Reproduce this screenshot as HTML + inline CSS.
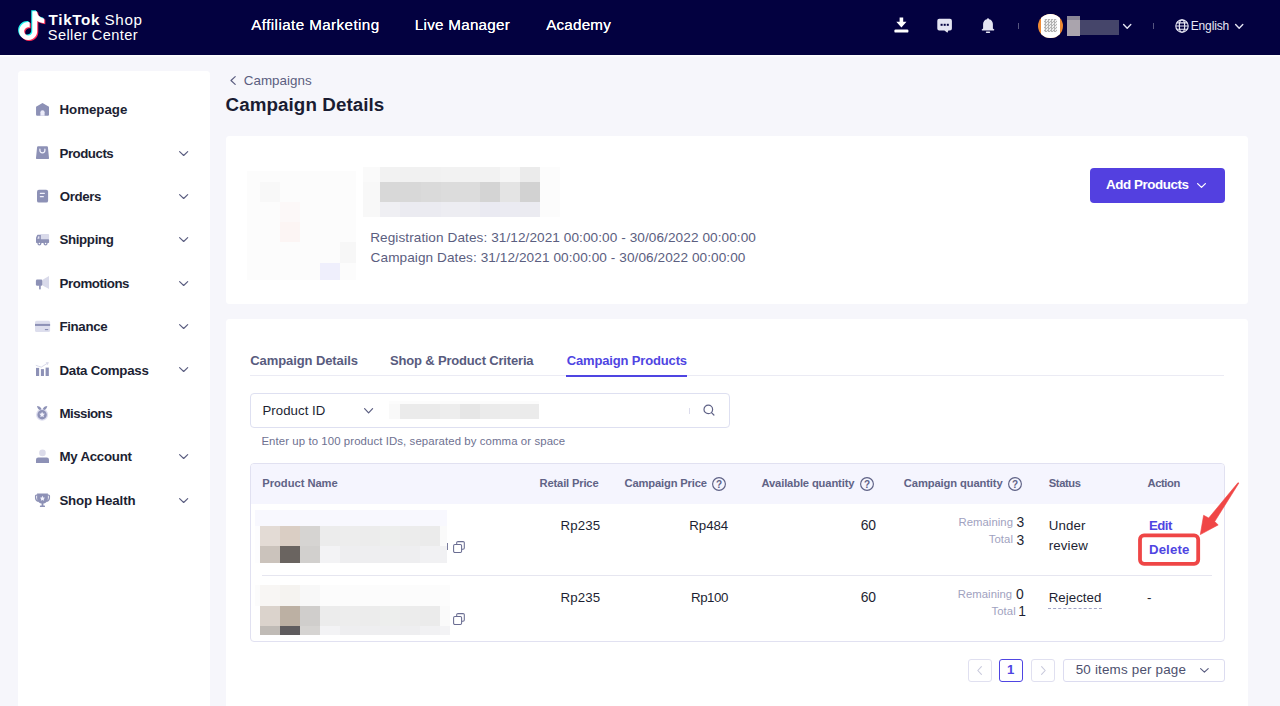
<!DOCTYPE html>
<html><head><meta charset="utf-8"><title>Campaign Details</title>
<style>
*{box-sizing:border-box;margin:0;padding:0}
html,body{width:1280px;height:706px;overflow:hidden;background:#f6f6fb;font-family:"Liberation Sans",sans-serif;color:#1d1f33}
.t{position:absolute;white-space:nowrap;line-height:1}
.b{position:absolute}
svg{position:absolute;overflow:visible}
#hdr{position:absolute;left:0;top:0;width:1280px;height:55px;background:#030140}
#side{position:absolute;left:17.800px;top:70.800px;width:192.200px;height:650px;background:#fff;border-radius:3.500px}
.card{position:absolute;background:#fff;border-radius:3.500px}
</style></head><body>
<div id="hdr"></div><div class="b" style="left:0;top:55px;width:1280px;height:1px;background:#fff"></div><div class="b" style="left:0;top:56px;width:1280px;height:1px;background:#fbfbfe"></div>
<div id="side"></div>
<div class="card" style="left:226px;top:135.800px;width:1022.400px;height:167.900px"></div>
<div class="card" style="left:226px;top:319.300px;width:1022.400px;height:400px"></div>
<svg style="left:16.2px;top:10px" width="30" height="32" viewBox="0 0 25 26.67">
<g transform="translate(0.2,0.2) scale(1.0)"><path d="M12.525.02c1.31-.02 2.61-.01 3.91-.02.08 1.53.63 3.09 1.75 4.17 1.12 1.11 2.7 1.62 4.24 1.79v4.03c-1.44-.05-2.89-.35-4.2-.97-.57-.26-1.1-.59-1.62-.93-.01 2.92.01 5.84-.02 8.75-.08 1.4-.54 2.79-1.35 3.94-1.31 1.92-3.58 3.17-5.91 3.21-1.43.08-2.86-.31-4.08-1.03-2.02-1.19-3.44-3.37-3.65-5.71-.02-.5-.03-1-.01-1.49.18-1.9 1.12-3.72 2.58-4.96 1.66-1.44 3.98-2.13 6.15-1.72.02 1.48-.04 2.96-.04 4.44-.99-.32-2.15-.23-3.02.37-.63.41-1.11 1.04-1.36 1.75-.21.51-.15 1.07-.14 1.61.24 1.64 1.82 3.02 3.5 2.87 1.12-.01 2.19-.66 2.77-1.61.19-.33.4-.67.41-1.06.1-1.79.06-3.57.07-5.36.01-4.03-.01-8.05.02-12.07z" fill="#25f4ee"/></g>
<g transform="translate(2.0,1.9)"><path d="M12.525.02c1.31-.02 2.61-.01 3.91-.02.08 1.53.63 3.09 1.75 4.17 1.12 1.11 2.7 1.62 4.24 1.79v4.03c-1.44-.05-2.89-.35-4.2-.97-.57-.26-1.1-.59-1.62-.93-.01 2.92.01 5.84-.02 8.75-.08 1.4-.54 2.79-1.35 3.94-1.31 1.92-3.58 3.17-5.91 3.21-1.43.08-2.86-.31-4.08-1.03-2.02-1.19-3.44-3.37-3.65-5.71-.02-.5-.03-1-.01-1.49.18-1.9 1.12-3.72 2.58-4.96 1.66-1.44 3.98-2.13 6.15-1.72.02 1.48-.04 2.96-.04 4.44-.99-.32-2.15-.23-3.02.37-.63.41-1.11 1.04-1.36 1.75-.21.51-.15 1.07-.14 1.61.24 1.64 1.82 3.02 3.5 2.87 1.12-.01 2.19-.66 2.77-1.61.19-.33.4-.67.41-1.06.1-1.79.06-3.57.07-5.36.01-4.03-.01-8.05.02-12.07z" fill="#fe2c55"/></g>
<g transform="translate(1.1,1.05)"><path d="M12.525.02c1.31-.02 2.61-.01 3.91-.02.08 1.53.63 3.09 1.75 4.17 1.12 1.11 2.7 1.62 4.24 1.79v4.03c-1.44-.05-2.89-.35-4.2-.97-.57-.26-1.1-.59-1.62-.93-.01 2.92.01 5.84-.02 8.75-.08 1.4-.54 2.79-1.35 3.94-1.31 1.92-3.58 3.17-5.91 3.21-1.43.08-2.86-.31-4.08-1.03-2.02-1.19-3.44-3.37-3.65-5.71-.02-.5-.03-1-.01-1.49.18-1.9 1.12-3.72 2.58-4.96 1.66-1.44 3.98-2.13 6.15-1.72.02 1.48-.04 2.96-.04 4.44-.99-.32-2.15-.23-3.02.37-.63.41-1.11 1.04-1.36 1.75-.21.51-.15 1.07-.14 1.61.24 1.64 1.82 3.02 3.5 2.87 1.12-.01 2.19-.66 2.77-1.61.19-.33.4-.67.41-1.06.1-1.79.06-3.57.07-5.36.01-4.03-.01-8.05.02-12.07z" fill="#fff"/></g>
</svg><svg style="left:894px;top:17px" width="15" height="16" viewBox="0 0 15 16">
<path d="M5.6 .5h3.6v4.2h3.3L7.4 10.6 2.3 4.7h3.3z" fill="#fff"/>
<rect x=".4" y="12.4" width="14" height="3.2" rx="1.2" fill="#fff"/></svg><svg style="left:937px;top:18px" width="16" height="16" viewBox="0 0 16 16">
<path d="M2.2 .8h10.8a1.9 1.9 0 0 1 1.9 1.9v7.9a1.9 1.9 0 0 1-1.9 1.9h-1.6l-1 2.2-3-2.2H2.2a1.9 1.9 0 0 1-1.9-1.9V2.7A1.9 1.9 0 0 1 2.200 .8z" fill="#e4e4f2"/>
<rect x="3.6" y="5.8" width="2" height="2" fill="#030140"/><rect x="6.7" y="5.8" width="2" height="2" fill="#030140"/><rect x="9.8" y="5.8" width="2" height="2" fill="#030140"/></svg><svg style="left:981px;top:18px" width="14" height="16" viewBox="0 0 14 16">
<path d="M7 .2c.6 0 1 .4 1.100 1 2.300 .5 3.800 2.400 3.800 4.900v4.300l1.300 1.100c.3 .3 .1 .900-.4 .9H1.200c-.5 0-.7-.6-.4-.9l1.300-1.100V6.100c0-2.500 1.500-4.400 3.800-4.900C6 .6 6.400 .2 7 .2z" fill="#e4e4f2"/>
<rect x="4.800" y="13.5" width="4.400" height="1.500" rx=".7" fill="#e4e4f2"/></svg><div class="b" style="left:1018px;top:22.5px;width:1px;height:6.5px;background:#55557f"></div><div class="b" style="left:1153px;top:22.5px;width:1px;height:6.5px;background:#55557f"></div><div class="b" style="left:1038px;top:13.7px;width:24.500px;height:24px;border-radius:50%;background:#ee8a34;overflow:hidden">
<div class="b" style="left:2.500px;top:0;width:19.500px;height:24px;background:#fff"></div>
<div class="b" style="left:6px;top:5.500px;width:12.500px;height:13px;background:repeating-conic-gradient(#9a9a9a 0 25%,#e8e8e8 0 50%) 0 0/3px 3px;opacity:.75"></div>
</div><div class="b" style="left:1067px;top:16px;width:13px;height:19.500px;background:#aaa4ad"></div><div class="b" style="left:1067px;top:16px;width:13px;height:4px;background:#8a8696"></div><div class="b" style="left:1080px;top:20px;width:38.500px;height:15px;background:#45456a"></div><svg style="left:1123px;top:23.5px" width="8.4" height="5" viewBox="0 0 8.4 5"><path d="M.6 .6L4.2 4.2L7.800000000000001 .6" fill="none" stroke="#e4e4f2" stroke-width="1.4" stroke-linecap="round" stroke-linejoin="round"/></svg><svg style="left:1235px;top:23.5px" width="8.4" height="5" viewBox="0 0 8.4 5"><path d="M.6 .6L4.2 4.2L7.800000000000001 .6" fill="none" stroke="#e4e4f2" stroke-width="1.4" stroke-linecap="round" stroke-linejoin="round"/></svg><svg style="left:1174.500px;top:18.800px" width="14" height="14" viewBox="0 0 14 14" fill="none" stroke="#e8e8f4" stroke-width="1.150">
<circle cx="7" cy="7" r="6.200"/><ellipse cx="7" cy="7" rx="2.700" ry="6.200"/><path d="M1 7h12M1.800 3.800h10.400M1.800 10.200h10.400"/></svg><svg style="left:0;top:0" width="1280" height="706" viewBox="0 0 1280 706"><path d="M42.500 102.900L36.050 106.700V114.700a1.100 1.100 0 0 0 1.100 1.100H47.900a1.100 1.100 0 0 0 1.100-1.100V106.700z" fill="#8d91b6"/><path d="M40.400 115.800V112.300a2.100 2.100 0 0 1 4.200 0V115.800z" fill="#ececfa"/><path d="M38.100 146.200H46.900a1 1 0 0 1 1 .9L49 157.900a1.100 1.100 0 0 1-1.100 1.200H37.100a1.100 1.100 0 0 1-1.100-1.200L37.100 147.100a1 1 0 0 1 1-.9z" fill="#8d91b6"/><path d="M39.900 149.100v1.200a2.500 2.500 0 0 0 5 0v-1.200" fill="none" stroke="#f2f2fc" stroke-width="1.250" stroke-linecap="round"/><rect x="37" y="189.800" width="11.100" height="12.800" rx="1.900" fill="#8d91b6"/><rect x="39.800" y="192.800" width="5.100" height="1.250" rx=".5" fill="#f2f2fc"/><rect x="39.800" y="195.900" width="4.100" height="1.250" rx=".5" fill="#f2f2fc"/><rect x="40.400" y="234" width="8.700" height="6" rx=".9" fill="#d9daea"/><path d="M37.700 234.800H40.900V240H36V238.200c0-.5 .1-.9 .3-1.300l.7-1.500c.2-.4 .4-.6 .7-.6z" fill="#8d91b6"/><rect x="36" y="239.300" width="13.100" height="3.700" rx=".7" fill="#8d91b6"/><circle cx="39.400" cy="243.400" r="2" fill="#8d91b6"/><circle cx="45.550" cy="243.400" r="2" fill="#8d91b6"/><circle cx="39.400" cy="243.400" r=".75" fill="#fff"/><circle cx="45.550" cy="243.400" r=".75" fill="#fff"/><path d="M38.300 236.200h1.100v2.600h-2.100z" fill="#e4e4f2"/><path d="M42.600 279.700L49 276.100V289L42.600 285.600z" fill="#d9daea"/><rect x="35.900" y="279.600" width="6.500" height="6.200" rx="1.300" fill="#8d91b6"/><rect x="39.100" y="285" width="1.650" height="4.400" rx=".6" fill="#8d91b6"/><rect x="35" y="320.800" width="15.100" height="11.300" rx="1.600" fill="#dddeed"/><rect x="35" y="323.900" width="15.100" height="2.050" fill="#8d91b6"/><rect x="44.900" y="329" width="3.300" height="1.150" fill="#8d91b6"/><rect x="36" y="367.900" width="3.150" height="8.100" fill="#8d91b6"/><rect x="40.900" y="369.100" width="3.050" height="6.900" fill="#8d91b6"/><rect x="45.600" y="367.600" width="3.250" height="8.400" fill="#8d91b6"/><path d="M36.200 365.400L38.300 366.200 41.300 367.100 47.800 363" fill="none" stroke="#d9daea" stroke-width="1" stroke-linecap="round" stroke-linejoin="round"/><path d="M45.600 362.200L48.800 362.300 47.700 365.300z" fill="#d9daea"/><circle cx="42.100" cy="414.700" r="6" fill="#dcdcee"/><circle cx="42.100" cy="414.700" r="4.700" fill="#8d91b6"/><path d="M42.100 411.800l.85 1.800 1.950 .25-1.450 1.350 .4 1.950-1.750-.95-1.750 .95 .4-1.950-1.450-1.350 1.950-.25z" fill="#f2f2fc"/><path d="M37 405.900c1.600 0 3.200 .8 4.100 2.300l.4 .9-1.500 .9c-1.700-.6-2.800-2.200-3-4.100z" fill="#8d91b6"/><path d="M47.300 405.900c-1.600 0-3.200 .8-4.100 2.300l-.4 .9 1.500 .9c1.700-.6 2.800-2.200 3-4.100z" fill="#8d91b6"/><circle cx="42.450" cy="452.900" r="3.300" fill="#dcdcea"/><path d="M38.200 457.600H46.800a2.200 2.200 0 0 1 2.200 2.200V463H36V459.800a2.200 2.200 0 0 1 2.200-2.200z" fill="#8d91b6"/><path d="M37.600 495.200H36.300a.7 .7 0 0 0-.7 .7v1.900c0 1.900 1.100 3.200 2.900 3.600M47.400 495.200h1.300a.7 .7 0 0 1 .7 .7v1.900c0 1.900-1.100 3.200-2.900 3.600" fill="none" stroke="#8d91b6" stroke-width="1.300"/><path d="M37.100 493.600H47.900V498.500c0 2.800-2.100 5.100-5.400 5.100s-5.400-2.300-5.400-5.100z" fill="#8d91b6"/><rect x="41.600" y="503" width="1.800" height="3" fill="#8d91b6"/><rect x="39.900" y="505.400" width="5.100" height="1.650" rx=".5" fill="#8d91b6"/><path d="M42.450 495.800l.8 1.650 1.800 .25-1.300 1.250 .3 1.800-1.600-.85-1.600 .85 .3-1.800-1.300-1.250 1.800-.25z" fill="#f2f2fc"/></svg><svg style="left:178.9px;top:150.5px" width="9.3" height="5.3" viewBox="0 0 9.3 5.3"><path d="M.6 .6L4.65 4.5L8.700000000000001 .6" fill="none" stroke="#5a5d80" stroke-width="1.15" stroke-linecap="round" stroke-linejoin="round"/></svg><svg style="left:178.9px;top:193.9px" width="9.3" height="5.3" viewBox="0 0 9.3 5.3"><path d="M.6 .6L4.65 4.5L8.700000000000001 .6" fill="none" stroke="#5a5d80" stroke-width="1.15" stroke-linecap="round" stroke-linejoin="round"/></svg><svg style="left:178.9px;top:237.2px" width="9.3" height="5.3" viewBox="0 0 9.3 5.3"><path d="M.6 .6L4.65 4.5L8.700000000000001 .6" fill="none" stroke="#5a5d80" stroke-width="1.15" stroke-linecap="round" stroke-linejoin="round"/></svg><svg style="left:178.9px;top:280.7px" width="9.3" height="5.3" viewBox="0 0 9.3 5.3"><path d="M.6 .6L4.65 4.5L8.700000000000001 .6" fill="none" stroke="#5a5d80" stroke-width="1.15" stroke-linecap="round" stroke-linejoin="round"/></svg><svg style="left:178.9px;top:324.1px" width="9.3" height="5.3" viewBox="0 0 9.3 5.3"><path d="M.6 .6L4.65 4.5L8.700000000000001 .6" fill="none" stroke="#5a5d80" stroke-width="1.15" stroke-linecap="round" stroke-linejoin="round"/></svg><svg style="left:178.9px;top:367.4px" width="9.3" height="5.3" viewBox="0 0 9.3 5.3"><path d="M.6 .6L4.65 4.5L8.700000000000001 .6" fill="none" stroke="#5a5d80" stroke-width="1.15" stroke-linecap="round" stroke-linejoin="round"/></svg><svg style="left:178.9px;top:454.2px" width="9.3" height="5.3" viewBox="0 0 9.3 5.3"><path d="M.6 .6L4.65 4.5L8.700000000000001 .6" fill="none" stroke="#5a5d80" stroke-width="1.15" stroke-linecap="round" stroke-linejoin="round"/></svg><svg style="left:178.9px;top:497.6px" width="9.3" height="5.3" viewBox="0 0 9.3 5.3"><path d="M.6 .6L4.65 4.5L8.700000000000001 .6" fill="none" stroke="#5a5d80" stroke-width="1.15" stroke-linecap="round" stroke-linejoin="round"/></svg><svg style="left:230px;top:76.400px" width="6" height="9" viewBox="0 0 6 9"><path d="M5.200 .6L1 4.500 5.200 8.400" fill="none" stroke="#5b5e80" stroke-width="1.200" stroke-linecap="round" stroke-linejoin="round"/></svg><div class="b" style="left:246.6px;top:170.5px;width:109.4px;height:109.0px;background:#fcfcfc"></div><div class="b" style="left:280.0px;top:202.0px;width:20.0px;height:40.0px;background:#fcf8f8"></div><div class="b" style="left:280.0px;top:222.0px;width:20.0px;height:20.0px;background:#fcf5f4"></div><div class="b" style="left:319.7px;top:263.0px;width:20.3px;height:16.5px;background:#efeffc"></div><div class="b" style="left:340.0px;top:242.0px;width:16.0px;height:21.0px;background:#f7f7f7"></div><div class="b" style="left:260.0px;top:182.0px;width:20.0px;height:20.0px;background:#f8f8f8"></div><div class="b" style="left:362.7px;top:166.6px;width:17.7px;height:15.2px;background:#fafafa"></div><div class="b" style="left:362.7px;top:181.8px;width:17.7px;height:20.2px;background:#f8f8f8"></div><div class="b" style="left:362.7px;top:202.0px;width:17.7px;height:14.6px;background:#f8f8f8"></div><div class="b" style="left:380.2px;top:166.6px;width:20.2px;height:15.2px;background:#f2f2f2"></div><div class="b" style="left:380.2px;top:181.8px;width:20.2px;height:20.2px;background:#d8d8d8"></div><div class="b" style="left:380.2px;top:202.0px;width:20.2px;height:14.6px;background:#efeff3"></div><div class="b" style="left:400.2px;top:166.6px;width:20.6px;height:15.2px;background:#f1f1f1"></div><div class="b" style="left:400.2px;top:181.8px;width:20.6px;height:20.2px;background:#d8d8d8"></div><div class="b" style="left:400.2px;top:202.0px;width:20.6px;height:14.6px;background:#ebebf1"></div><div class="b" style="left:420.6px;top:166.6px;width:20.1px;height:15.2px;background:#f1f1f1"></div><div class="b" style="left:420.6px;top:181.8px;width:20.1px;height:20.2px;background:#dadada"></div><div class="b" style="left:420.6px;top:202.0px;width:20.1px;height:14.6px;background:#ebebf1"></div><div class="b" style="left:440.5px;top:166.6px;width:20.1px;height:15.2px;background:#f2f2f2"></div><div class="b" style="left:440.5px;top:181.8px;width:20.1px;height:20.2px;background:#dcdcdc"></div><div class="b" style="left:440.5px;top:202.0px;width:20.1px;height:14.6px;background:#ededf2"></div><div class="b" style="left:460.4px;top:166.6px;width:19.6px;height:15.2px;background:#f2f2f2"></div><div class="b" style="left:460.4px;top:181.8px;width:19.6px;height:20.2px;background:#dcdcdc"></div><div class="b" style="left:460.4px;top:202.0px;width:19.6px;height:14.6px;background:#ededf2"></div><div class="b" style="left:479.8px;top:166.6px;width:20.2px;height:15.2px;background:#f2f2f2"></div><div class="b" style="left:479.8px;top:181.8px;width:20.2px;height:20.2px;background:#d4d4d4"></div><div class="b" style="left:479.8px;top:202.0px;width:20.2px;height:14.6px;background:#eaeaf2"></div><div class="b" style="left:499.8px;top:166.6px;width:20.1px;height:15.2px;background:#f6f6f6"></div><div class="b" style="left:499.8px;top:181.8px;width:20.1px;height:20.2px;background:#e4e4e4"></div><div class="b" style="left:499.8px;top:202.0px;width:20.1px;height:14.6px;background:#ebebf2"></div><div class="b" style="left:519.7px;top:166.6px;width:20.6px;height:15.2px;background:#ebebeb"></div><div class="b" style="left:519.7px;top:181.8px;width:20.6px;height:20.2px;background:#d2d2d2"></div><div class="b" style="left:519.7px;top:202.0px;width:20.6px;height:14.6px;background:#ebebf1"></div><div class="b" style="left:540.1px;top:166.6px;width:20.1px;height:15.2px;background:#fcfcfc"></div><div class="b" style="left:540.1px;top:181.8px;width:20.1px;height:20.2px;background:#fcfcfc"></div><div class="b" style="left:540.1px;top:202.0px;width:20.1px;height:14.6px;background:#fcfcfc"></div><div class="b" style="left:1090px;top:167.500px;width:135px;height:35.500px;border-radius:4px;background:#5340e0"></div><svg style="left:1196.7px;top:182.6px" width="9" height="5.2" viewBox="0 0 9 5.2"><path d="M.6 .6L4.5 4.4L8.4 .6" fill="none" stroke="#fff" stroke-width="1.3" stroke-linecap="round" stroke-linejoin="round"/></svg><div class="b" style="left:250px;top:375px;width:974px;height:1px;background:#ebebf4"></div><div class="b" style="left:566.200px;top:374.700px;width:120.800px;height:2.100px;background:#4f45e2"></div><div class="b" style="left:249.500px;top:393px;width:480.500px;height:35px;border:1px solid #dee0f1;border-radius:4px;background:#fff"></div><svg style="left:364.3px;top:408.3px" width="9.2" height="5.6" viewBox="0 0 9.2 5.6"><path d="M.6 .6L4.6 4.8L8.6 .6" fill="none" stroke="#5a5d80" stroke-width="1.2" stroke-linecap="round" stroke-linejoin="round"/></svg><div class="b" style="left:389.0px;top:401.0px;width:150.2px;height:17.9px;background:#fcfcfc"></div><div class="b" style="left:389.0px;top:404.1px;width:10.7px;height:14.8px;background:#f9f9f9"></div><div class="b" style="left:399.7px;top:404.1px;width:20.2px;height:14.8px;background:#ebebeb"></div><div class="b" style="left:419.7px;top:404.1px;width:20.3px;height:14.8px;background:#eaeaea"></div><div class="b" style="left:439.8px;top:404.1px;width:20.3px;height:14.8px;background:#ededed"></div><div class="b" style="left:459.9px;top:404.1px;width:20.4px;height:14.8px;background:#e6e6e6"></div><div class="b" style="left:480.1px;top:404.1px;width:20.1px;height:14.8px;background:#ebebeb"></div><div class="b" style="left:500.0px;top:404.1px;width:20.2px;height:14.8px;background:#ececec"></div><div class="b" style="left:520.0px;top:404.1px;width:19.4px;height:14.8px;background:#ebebeb"></div><div class="b" style="left:689px;top:407.500px;width:1px;height:6.500px;background:#dcdcec"></div><svg style="left:702.700px;top:404.300px" width="12" height="12" viewBox="0 0 12 12" fill="none" stroke="#5e6186" stroke-width="1.200" stroke-linecap="round"><circle cx="5.300" cy="5.400" r="4.300"/><path d="M8.500 8.600l2.400 2.400"/></svg><div class="b" style="left:249.500px;top:462.500px;width:975px;height:179.500px;border:1px solid #e1e1f1;border-radius:4px;background:#fff;overflow:hidden"><div style="height:40.500px;background:#f5f5fe"></div></div><div class="b" style="left:262px;top:575.200px;width:950px;height:1px;background:#e6e6f0"></div><svg style="left:711.4px;top:476px" width="16" height="16" viewBox="0 0 16 16"><circle cx="8" cy="8" r="6.400" fill="none" stroke="#5f6286" stroke-width="1.150"/><text x="8" y="11.600" text-anchor="middle" font-family="Liberation Sans, sans-serif" font-size="10" font-weight="bold" fill="#5f6286">?</text></svg><svg style="left:859.1px;top:476px" width="16" height="16" viewBox="0 0 16 16"><circle cx="8" cy="8" r="6.400" fill="none" stroke="#5f6286" stroke-width="1.150"/><text x="8" y="11.600" text-anchor="middle" font-family="Liberation Sans, sans-serif" font-size="10" font-weight="bold" fill="#5f6286">?</text></svg><svg style="left:1007px;top:476px" width="16" height="16" viewBox="0 0 16 16"><circle cx="8" cy="8" r="6.400" fill="none" stroke="#5f6286" stroke-width="1.150"/><text x="8" y="11.600" text-anchor="middle" font-family="Liberation Sans, sans-serif" font-size="10" font-weight="bold" fill="#5f6286">?</text></svg><div class="b" style="left:254.8px;top:509.8px;width:192.2px;height:15.8px;background:#f8f8fe"></div><div class="b" style="left:254.8px;top:525.6px;width:5.2px;height:37.1px;background:#fdfdfe"></div><div class="b" style="left:260.0px;top:525.6px;width:20.2px;height:20.4px;background:#e3dbd5"></div><div class="b" style="left:260.0px;top:545.5px;width:20.2px;height:17.2px;background:#cbc3bc"></div><div class="b" style="left:280.0px;top:525.6px;width:20.3px;height:20.4px;background:#dacec4"></div><div class="b" style="left:280.0px;top:545.5px;width:20.3px;height:17.2px;background:#6a6460"></div><div class="b" style="left:300.1px;top:525.6px;width:20.1px;height:20.4px;background:#d6d4d2"></div><div class="b" style="left:300.1px;top:545.5px;width:20.1px;height:17.2px;background:#d2d0ce"></div><div class="b" style="left:320.0px;top:525.6px;width:20.2px;height:20.4px;background:#ececec"></div><div class="b" style="left:320.0px;top:545.5px;width:20.2px;height:17.2px;background:#f3f3f5"></div><div class="b" style="left:340.0px;top:525.6px;width:20.2px;height:20.4px;background:#ededed"></div><div class="b" style="left:340.0px;top:545.5px;width:20.2px;height:17.2px;background:#eeeef0"></div><div class="b" style="left:360.0px;top:525.6px;width:20.2px;height:20.4px;background:#ececec"></div><div class="b" style="left:360.0px;top:545.5px;width:20.2px;height:17.2px;background:#eeeef0"></div><div class="b" style="left:380.0px;top:525.6px;width:20.2px;height:20.4px;background:#edeeed"></div><div class="b" style="left:380.0px;top:545.5px;width:20.2px;height:17.2px;background:#eeeef0"></div><div class="b" style="left:400.0px;top:525.6px;width:20.2px;height:20.4px;background:#ececec"></div><div class="b" style="left:400.0px;top:545.5px;width:20.2px;height:17.2px;background:#eeeef0"></div><div class="b" style="left:420.0px;top:525.6px;width:19.9px;height:20.4px;background:#ebebeb"></div><div class="b" style="left:420.0px;top:545.5px;width:19.9px;height:17.2px;background:#f1f1f3"></div><div class="b" style="left:439.7px;top:525.6px;width:7.5px;height:20.4px;background:#fafafa"></div><div class="b" style="left:439.7px;top:545.5px;width:7.5px;height:17.2px;background:#f1f1f3"></div><div class="b" style="left:254.8px;top:585.3px;width:195.0px;height:21.0px;background:#fcfcfc"></div><div class="b" style="left:260.0px;top:585.3px;width:20.0px;height:21.0px;background:#f8f6f4"></div><div class="b" style="left:280.0px;top:585.3px;width:20.0px;height:21.0px;background:#f5f3f0"></div><div class="b" style="left:300.0px;top:585.3px;width:20.0px;height:21.0px;background:#f8f8f8"></div><div class="b" style="left:260.0px;top:606.3px;width:20.2px;height:20.7px;background:#dbd3cc"></div><div class="b" style="left:260.0px;top:626.4px;width:20.2px;height:8.6px;background:#c0bbb6"></div><div class="b" style="left:280.0px;top:606.3px;width:20.3px;height:20.7px;background:#bcb0a3"></div><div class="b" style="left:280.0px;top:626.4px;width:20.3px;height:8.6px;background:#5f5c5e"></div><div class="b" style="left:300.1px;top:606.3px;width:20.1px;height:20.7px;background:#d0cecc"></div><div class="b" style="left:300.1px;top:626.4px;width:20.1px;height:8.6px;background:#d6d4d2"></div><div class="b" style="left:320.0px;top:606.3px;width:20.2px;height:20.7px;background:#ececec"></div><div class="b" style="left:320.0px;top:626.4px;width:20.2px;height:8.6px;background:#f3f3f5"></div><div class="b" style="left:340.0px;top:606.3px;width:20.2px;height:20.7px;background:#ededed"></div><div class="b" style="left:340.0px;top:626.4px;width:20.2px;height:8.6px;background:#eeeef0"></div><div class="b" style="left:360.0px;top:606.3px;width:20.2px;height:20.7px;background:#ececec"></div><div class="b" style="left:360.0px;top:626.4px;width:20.2px;height:8.6px;background:#eeeef0"></div><div class="b" style="left:380.0px;top:606.3px;width:20.2px;height:20.7px;background:#edeeed"></div><div class="b" style="left:380.0px;top:626.4px;width:20.2px;height:8.6px;background:#eeeef0"></div><div class="b" style="left:400.0px;top:606.3px;width:20.2px;height:20.7px;background:#ececec"></div><div class="b" style="left:400.0px;top:626.4px;width:20.2px;height:8.6px;background:#eeeef0"></div><div class="b" style="left:420.0px;top:606.3px;width:19.9px;height:20.7px;background:#ebebeb"></div><div class="b" style="left:420.0px;top:626.4px;width:19.9px;height:8.6px;background:#f1f1f3"></div><div class="b" style="left:439.7px;top:606.3px;width:10.3px;height:20.7px;background:#fafafa"></div><div class="b" style="left:439.7px;top:626.4px;width:10.3px;height:8.6px;background:#f3f3f5"></div><div class="b" style="left:446.600px;top:542.500px;width:1px;height:7.500px;background:#7a7d9e"></div><svg style="left:452.6px;top:540.8px" width="12" height="12" viewBox="0 0 12 12" fill="none" stroke="#6a6d92" stroke-width="1.050"><path d="M3.700 3.300V1.900a1.300 1.300 0 0 1 1.300-1.300H10a1.300 1.300 0 0 1 1.300 1.300V7a1.300 1.300 0 0 1-1.300 1.300H8.800"/><rect x=".6" y="3.500" width="8" height="8" rx="1.300"/></svg><svg style="left:452.6px;top:612.8px" width="12" height="12" viewBox="0 0 12 12" fill="none" stroke="#6a6d92" stroke-width="1.050"><path d="M3.700 3.300V1.900a1.300 1.300 0 0 1 1.300-1.300H10a1.300 1.300 0 0 1 1.300 1.300V7a1.300 1.300 0 0 1-1.300 1.300H8.800"/><rect x=".6" y="3.500" width="8" height="8" rx="1.300"/></svg><div class="b" style="left:1048.400px;top:608px;width:53.500px;height:0;border-top:1px dashed #a3a6c8"></div><svg style="left:0;top:0" width="1280" height="706" viewBox="0 0 1280 706"><rect x="1140" y="535.400" width="58.200" height="28.400" rx="4" fill="none" stroke="#ef4646" stroke-width="3.800"/></svg><svg style="left:0;top:0" width="1280" height="706" viewBox="0 0 1280 706"><path d="M1238.900 483L1214.700 521.600 1218.200 524.900 1200.300 534.600 1203.600 515.300 1208.700 518 1237.900 482.800z" fill="#f04646" stroke="#f04646" stroke-width=".6" stroke-linejoin="round"/></svg><div class="b" style="left:968px;top:658.500px;width:23.700px;height:23.300px;border:1px solid #e0e0f0;border-radius:3px;background:#fff"></div><div class="b" style="left:999.300px;top:658.500px;width:23.700px;height:23.300px;border:1px solid #4f45e2;border-radius:3px;background:#fff"></div><div class="b" style="left:1031px;top:658.500px;width:23.600px;height:23.300px;border:1px solid #e0e0f0;border-radius:3px;background:#fff"></div><svg style="left:977px;top:665.700px" width="5" height="9" viewBox="0 0 5 9"><path d="M4.400 .6L.8 4.500 4.400 8.400" fill="none" stroke="#c8c9dc" stroke-width="1.100" stroke-linecap="round" stroke-linejoin="round"/></svg><svg style="left:1040.600px;top:665.700px" width="5" height="9" viewBox="0 0 5 9"><path d="M.6 .6L4.200 4.500 .6 8.400" fill="none" stroke="#c8c9dc" stroke-width="1.100" stroke-linecap="round" stroke-linejoin="round"/></svg><div class="b" style="left:1062.800px;top:658.500px;width:162px;height:23.300px;border:1px solid #dcdcf0;border-radius:3px;background:#fff"></div><svg style="left:1200px;top:667.9px" width="8.8" height="5" viewBox="0 0 8.8 5"><path d="M.6 .6L4.4 4.2L8.200000000000001 .6" fill="none" stroke="#5a5d80" stroke-width="1.15" stroke-linecap="round" stroke-linejoin="round"/></svg><span class="t" style="left:48.61px;top:12px;font-size:15.2px;font-weight:bold;color:#fff;letter-spacing:0.67px;">TikTok</span>
<span class="t" style="left:104.54px;top:12px;font-size:15.2px;color:#fff;letter-spacing:0.67px;">Shop</span>
<span class="t" style="left:47.81px;top:28px;font-size:14.6px;color:#fff;letter-spacing:0.38px;">Seller Center</span>
<span class="t" style="left:251.31px;top:17px;font-size:15.2px;color:#fff;letter-spacing:0.41px;text-shadow:0 0 .4px #fff;">Affiliate Marketing</span>
<span class="t" style="left:414.82px;top:17px;font-size:15.2px;color:#fff;letter-spacing:0.27px;text-shadow:0 0 .4px #fff;">Live Manager</span>
<span class="t" style="left:546.19px;top:17px;font-size:15.2px;color:#fff;letter-spacing:0.22px;text-shadow:0 0 .4px #fff;">Academy</span>
<span class="t" style="left:1190.74px;top:20px;font-size:12px;color:#e8e8f4;letter-spacing:-0.15px;">English</span>
<span class="t" style="left:59.53px;top:103px;font-size:13.3px;font-weight:bold;color:#1d1f33;letter-spacing:-0.03px;">Homepage</span>
<span class="t" style="left:59.53px;top:147px;font-size:13.3px;font-weight:bold;color:#1d1f33;letter-spacing:-0.49px;">Products</span>
<span class="t" style="left:59.80px;top:190px;font-size:13.3px;font-weight:bold;color:#1d1f33;letter-spacing:-0.41px;">Orders</span>
<span class="t" style="left:59.39px;top:233px;font-size:13.3px;font-weight:bold;color:#1d1f33;letter-spacing:-0.33px;">Shipping</span>
<span class="t" style="left:59.53px;top:277px;font-size:13.3px;font-weight:bold;color:#1d1f33;letter-spacing:-0.43px;">Promotions</span>
<span class="t" style="left:59.53px;top:320px;font-size:13.3px;font-weight:bold;color:#1d1f33;letter-spacing:-0.36px;">Finance</span>
<span class="t" style="left:59.53px;top:364px;font-size:13.3px;font-weight:bold;color:#1d1f33;letter-spacing:-0.28px;">Data Compass</span>
<span class="t" style="left:59.53px;top:407px;font-size:13.3px;font-weight:bold;color:#1d1f33;letter-spacing:-0.55px;">Missions</span>
<span class="t" style="left:59.53px;top:450px;font-size:13.3px;font-weight:bold;color:#1d1f33;letter-spacing:-0.27px;">My Account</span>
<span class="t" style="left:59.39px;top:494px;font-size:13.3px;font-weight:bold;color:#1d1f33;letter-spacing:-0.14px;">Shop Health</span>
<span class="t" style="left:243.77px;top:74px;font-size:13.4px;color:#5b5e80;letter-spacing:0.02px;">Campaigns</span>
<span class="t" style="left:225.61px;top:96px;font-size:18.8px;font-weight:bold;color:#1a1c32;letter-spacing:0.07px;">Campaign Details</span>
<span class="t" style="left:370.17px;top:231px;font-size:13.6px;color:#5b5e80;letter-spacing:0.08px;">Registration Dates: 31/12/2021 00:00:00 - 30/06/2022 00:00:00</span>
<span class="t" style="left:370.62px;top:251px;font-size:13.6px;color:#5b5e80;letter-spacing:0.08px;">Campaign Dates: 31/12/2021 00:00:00 - 30/06/2022 00:00:00</span>
<span class="t" style="left:1106.09px;top:178px;font-size:13.4px;font-weight:bold;color:#fff;letter-spacing:-0.45px;">Add Products</span>
<span class="t" style="left:250.24px;top:354px;font-size:13px;font-weight:bold;color:#585b7e;letter-spacing:-0.09px;">Campaign Details</span>
<span class="t" style="left:389.99px;top:354px;font-size:13px;font-weight:bold;color:#585b7e;letter-spacing:-0.17px;">Shop &amp; Product Criteria</span>
<span class="t" style="left:566.80px;top:354px;font-size:13px;font-weight:bold;color:#4f45e2;letter-spacing:-0.16px;">Campaign Products</span>
<span class="t" style="left:262.53px;top:404px;font-size:13.2px;color:#1d1f33;letter-spacing:0.06px;">Product ID</span>
<span class="t" style="left:261.39px;top:436px;font-size:11.4px;color:#6e7191;letter-spacing:0.09px;">Enter up to 100 product IDs, separated by comma or space</span>
<span class="t" style="left:262.33px;top:478px;font-size:11.2px;font-weight:bold;color:#606386;letter-spacing:-0.04px;">Product Name</span>
<span class="t" style="left:539.57px;top:478px;font-size:11.2px;font-weight:bold;color:#606386;letter-spacing:-0.17px;">Retail Price</span>
<span class="t" style="left:624.55px;top:478px;font-size:11.2px;font-weight:bold;color:#606386;letter-spacing:-0.16px;">Campaign Price</span>
<span class="t" style="left:761.50px;top:478px;font-size:11.2px;font-weight:bold;color:#606386;letter-spacing:-0.14px;">Available quantity</span>
<span class="t" style="left:903.87px;top:478px;font-size:11.2px;font-weight:bold;color:#606386;letter-spacing:-0.12px;">Campaign quantity</span>
<span class="t" style="left:1048.82px;top:478px;font-size:11.2px;font-weight:bold;color:#606386;letter-spacing:-0.41px;">Status</span>
<span class="t" style="left:1147.58px;top:478px;font-size:11.2px;font-weight:bold;color:#606386;letter-spacing:-0.42px;">Action</span>
<span class="t" style="left:560.45px;top:519px;font-size:13.3px;color:#1d1f33;letter-spacing:0.16px;">Rp235</span>
<span class="t" style="left:689.19px;top:519px;font-size:13.3px;color:#1d1f33;letter-spacing:-0.03px;">Rp484</span>
<span class="t" style="left:860.78px;top:519px;font-size:13.9px;color:#1d1f33;letter-spacing:-0.12px;">60</span>
<span class="t" style="left:958.45px;top:517px;font-size:11.3px;color:#9fa2c0;letter-spacing:0.06px;">Remaining</span>
<span class="t" style="left:1016.58px;top:516px;font-size:13.9px;color:#1d1f33;letter-spacing:0.00px;">3</span>
<span class="t" style="left:988.65px;top:534px;font-size:11.3px;color:#9fa2c0;letter-spacing:0.11px;">Total</span>
<span class="t" style="left:1016.58px;top:534px;font-size:13.9px;color:#1d1f33;letter-spacing:0.00px;">3</span>
<span class="t" style="left:1048.80px;top:519px;font-size:13.3px;color:#1d1f33;letter-spacing:0.09px;">Under</span>
<span class="t" style="left:1048.82px;top:539px;font-size:13.3px;color:#1d1f33;letter-spacing:0.10px;">review</span>
<span class="t" style="left:1149.00px;top:519px;font-size:13.2px;font-weight:bold;color:#4f45e2;letter-spacing:-0.50px;">Edit</span>
<span class="t" style="left:1149.00px;top:543px;font-size:13.2px;font-weight:bold;color:#4f45e2;letter-spacing:0.13px;">Delete</span>
<span class="t" style="left:560.45px;top:591px;font-size:13.3px;color:#1d1f33;letter-spacing:0.16px;">Rp235</span>
<span class="t" style="left:691.00px;top:591px;font-size:13.3px;color:#1d1f33;letter-spacing:-0.44px;">Rp100</span>
<span class="t" style="left:860.78px;top:591px;font-size:13.9px;color:#1d1f33;letter-spacing:-0.12px;">60</span>
<span class="t" style="left:957.80px;top:589px;font-size:11.3px;color:#9fa2c0;letter-spacing:0.04px;">Remaining</span>
<span class="t" style="left:1016.00px;top:588px;font-size:13.9px;color:#1d1f33;letter-spacing:0.00px;">0</span>
<span class="t" style="left:991.44px;top:606px;font-size:11.3px;color:#9fa2c0;letter-spacing:0.10px;">Total</span>
<span class="t" style="left:1018.13px;top:605px;font-size:13.9px;color:#1d1f33;letter-spacing:0.00px;">1</span>
<span class="t" style="left:1048.68px;top:591px;font-size:13.3px;color:#1d1f33;letter-spacing:0.04px;">Rejected</span>
<span class="t" style="left:1146.99px;top:591px;font-size:13.3px;color:#1d1f33;letter-spacing:0.00px;">-</span>
<span class="t" style="left:1006.98px;top:663px;font-size:13.2px;font-weight:bold;color:#4f45e2;letter-spacing:0.00px;">1</span>
<span class="t" style="left:1075.72px;top:663px;font-size:13.4px;color:#4d506e;letter-spacing:0.19px;">50 items per page</span>
</body></html>
